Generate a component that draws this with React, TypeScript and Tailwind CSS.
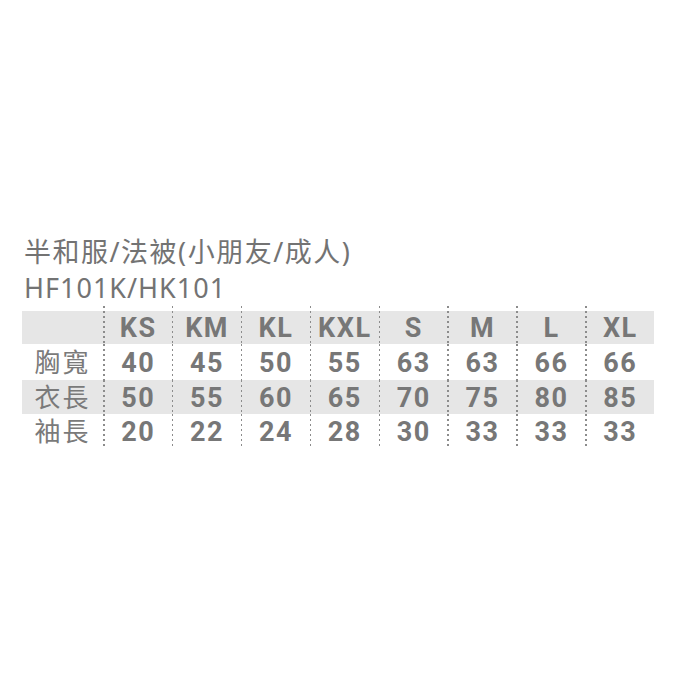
import React from "react";

const sizes = ["KS", "KM", "KL", "KXL", "S", "M", "L", "XL"];
const rows = [
  { label: "胸寬", values: ["40", "45", "50", "55", "63", "63", "66", "66"], bg: "bg-white", h: "h-[36px]" },
  { label: "衣長", values: ["50", "55", "60", "65", "70", "75", "80", "85"], bg: "bg-[#e6e6e6]", h: "h-[34px]" },
  { label: "袖長", values: ["20", "22", "24", "28", "30", "33", "33", "33"], bg: "bg-white", h: "h-[34px]" },
];

function Divider() {
  return (
    <div className="w-[1.5px] self-stretch bg-[repeating-linear-gradient(to_bottom,#8c8c8c_0px,#8c8c8c_2px,transparent_2px,transparent_5px)]" />
  );
}

function Row({ label, cells, bg, h, spacer }: { label: string; cells: string[]; bg: string; h: string; spacer?: boolean }) {
  return (
    <div className={`flex ${bg} ${h}`}>
      <div className="w-[81px] flex items-center justify-center pb-[3px] text-[26px] leading-none tracking-[2px] text-[#7a7a7a] font-['Noto_Sans_CJK_TC',sans-serif]">
        {label}
      </div>
      {cells.map((c, i) => (
        <div key={i} className="flex flex-1">
          <Divider />
          <div className="flex-1 flex items-center justify-center pt-[2px] text-[27px] leading-none font-bold tracking-[1.5px] text-[#777777] font-['Roboto',sans-serif]">
            {spacer ? "" : c}
          </div>
        </div>
      ))}
    </div>
  );
}

export default function App() {
  return (
    <div className="w-[684px] h-[684px] bg-white pt-[234px] pl-[22px] pr-[30px]">
      <div className="pl-[2px] text-[#737373] font-['Noto_Sans','Noto_Sans_CJK_TC',sans-serif] text-[27px] tracking-[1.5px] leading-[36px]">
        <div>半和服/法被(小朋友/成人)</div>
        <div className="tracking-[1px]">HF101K/HK101</div>
      </div>
      <div>
        <Row label="" cells={sizes} bg="bg-white" h="h-[5px]" spacer />
        <Row label="" cells={sizes} bg="bg-[#e6e6e6]" h="h-[33px]" />
        {rows.map((r) => (
          <Row key={r.label} label={r.label} cells={r.values} bg={r.bg} h={r.h} />
        ))}
      </div>
    </div>
  );
}
